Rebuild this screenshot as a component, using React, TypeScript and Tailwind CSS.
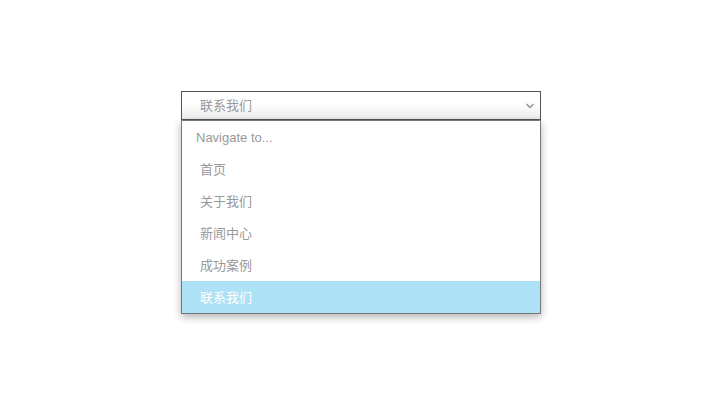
import { ChevronDown } from "lucide-react"

const items = ["首页", "关于我们", "新闻中心", "成功案例", "联系我们"]

export default function App() {
  const selected = "联系我们"
  return (
    <div className="w-[720px] h-[405px] bg-white flex justify-center pt-[91px] pl-[2px] font-['Liberation_Sans','Noto_Sans_CJK_SC',sans-serif] text-[13px]">
      <div className="w-[360px] flex flex-col">
        {/* Select */}
        <div className="h-[29px] flex items-center justify-between border border-[#555] bg-gradient-to-b from-white from-40% to-[#ededed] pl-[18px] pr-[4px] pt-[1px] text-[#999]">
          <span>{selected}</span>
          <ChevronDown className="w-[12px] h-[12px] text-[#999]" strokeWidth={3.5} />
        </div>
        {/* Dropdown */}
        <div className="border border-[#777] bg-white shadow-[0_3px_8px_rgba(0,0,0,0.3)]">
          <div className="h-[32px] flex items-center pl-[14px] pt-[1px] text-[#999]">Navigate to...</div>
          {items.map((item) => (
            <div
              key={item}
              className={`h-[32px] flex items-center pl-[18px] pt-[1px] ${
                item === selected ? "bg-[#ade1f5] text-white" : "text-[#999]"
              }`}
            >
              {item}
            </div>
          ))}
        </div>
      </div>
    </div>
  )
}
